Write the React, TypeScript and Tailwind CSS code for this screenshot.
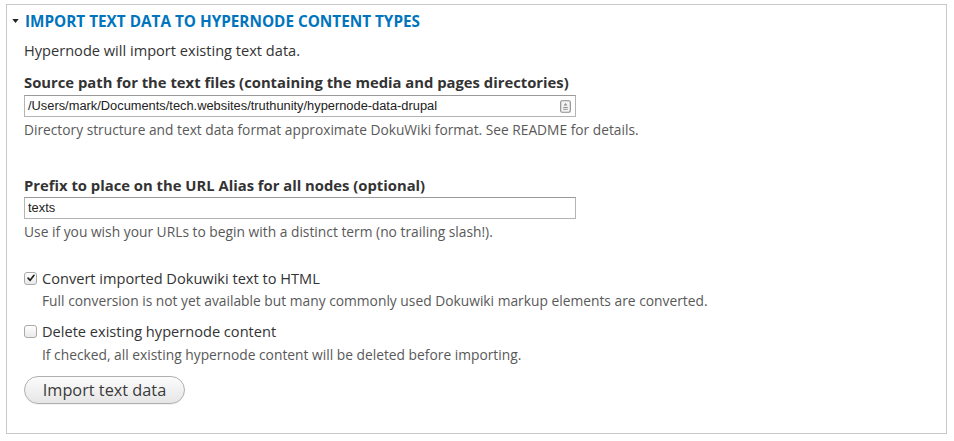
import React from 'react';

const Checkbox = ({ checked }: { checked?: boolean }) => (
  <span className="flex h-[13px] w-[13px] shrink-0 items-center justify-center rounded-[3px] border border-[#a9a9a9] bg-gradient-to-b from-[#ffffff] to-[#e9e9e9] shadow-[inset_0_1px_0_rgba(255,255,255,0.8)]">
    {checked && (
      <svg viewBox="0 0 12 12" className="h-[10px] w-[10px]">
        <path d="M2.5 6.2 L5 8.8 L9.6 2.8" fill="none" stroke="#222" strokeWidth="2" strokeLinecap="round" strokeLinejoin="round" />
      </svg>
    )}
  </span>
);

const App: React.FC = () => {
  return (
    <div className="h-[441px] w-[954px] bg-white pl-[6px] pr-[7px] pt-[4px] font-['Open_Sans',sans-serif] text-[#333]">
      <div className="h-[430px] border border-[#c8c8c8]">
        {/* Summary */}
        <div className="flex items-center pl-[5px] pt-[6px] leading-[20px]">
          <svg viewBox="0 0 8 5" className="mr-[6px] h-[4px] w-[7px]">
            <path d="M0 0 L8 0 L4 5 Z" fill="#222" />
          </svg>
          <span className="text-[15.3px] font-bold uppercase text-[#0074bd]">
            Import text data to hypernode content types
          </span>
        </div>

        <div className="pl-[17px]">
          <p className="mt-[9px] text-[14.6px] leading-[20px]">Hypernode will import existing text data.</p>

          {/* Source path */}
          <label className="mt-[12px] block text-[14.8px] font-bold leading-[20px]">
            Source path for the text files (containing the media and pages directories)
          </label>
          <div className="mt-[3px] flex h-[22px] w-[552px] items-center border border-[#b4b4b4] border-t-[#9a9a9a] pl-[3px] pr-[4px] font-['Liberation_Sans',Arial,sans-serif] text-[12.85px] text-[#222]">
            <span className="flex-1">/Users/mark/Documents/tech.websites/truthunity/hypernode-data-drupal</span>
            <svg viewBox="0 0 12 14" className="h-[13px] w-[11px]">
              <rect x="0.75" y="0.75" width="10.5" height="12.5" rx="1.5" fill="#f4f4f4" stroke="#8a8a8a" strokeWidth="1.2" />
              <path d="M6 3.2 L8 6 L4 6 Z" fill="#8a8a8a" />
              <rect x="3.5" y="7.5" width="5" height="1" fill="#8a8a8a" />
              <rect x="3.5" y="9.5" width="5" height="1" fill="#8a8a8a" />
            </svg>
          </div>
          <p className="mt-[3px] text-[13.75px] leading-[20px] text-[#595959]">
            Directory structure and text data format approximate DokuWiki format. See README for details.
          </p>

          {/* Prefix */}
          <label className="mt-[35px] block text-[14.8px] font-bold leading-[20px]">
            Prefix to place on the URL Alias for all nodes (optional)
          </label>
          <div className="mt-[2px] flex h-[22px] w-[552px] items-center border border-[#b4b4b4] border-t-[#9a9a9a] pl-[3px] font-['Liberation_Sans',Arial,sans-serif] text-[12.85px] text-[#222]">
            texts
          </div>
          <p className="mt-[3px] text-[13.8px] leading-[20px] text-[#595959]">
            Use if you wish your URLs to begin with a distinct term (no trailing slash!).
          </p>

          {/* Checkbox 1 */}
          <div className="mt-[26px] flex items-center gap-[5px] leading-[20px]">
            <Checkbox checked />
            <span className="text-[14.6px]">Convert imported Dokuwiki text to HTML</span>
          </div>
          <p className="mt-[3px] pl-[18px] text-[13.8px] leading-[20px] text-[#595959]">
            Full conversion is not yet available but many commonly used Dokuwiki markup elements are converted.
          </p>

          {/* Checkbox 2 */}
          <div className="mt-[10px] flex items-center gap-[5px] leading-[20px]">
            <Checkbox />
            <span className="text-[14.6px]">Delete existing hypernode content</span>
          </div>
          <p className="mt-[4px] pl-[18px] text-[13.8px] leading-[20px] text-[#595959]">
            If checked, all existing hypernode content will be deleted before importing.
          </p>

          <button className="mt-[11px] flex h-[28px] w-[161px] items-center justify-center rounded-full border border-[#b0b0b0] bg-gradient-to-b from-[#fcfcfc] to-[#e6e6e6] text-[16.3px] text-[#3a3a3a] shadow-[0_1px_0_rgba(0,0,0,0.05)]">
            Import text data
          </button>
        </div>
      </div>
    </div>
  );
};

export default App;
